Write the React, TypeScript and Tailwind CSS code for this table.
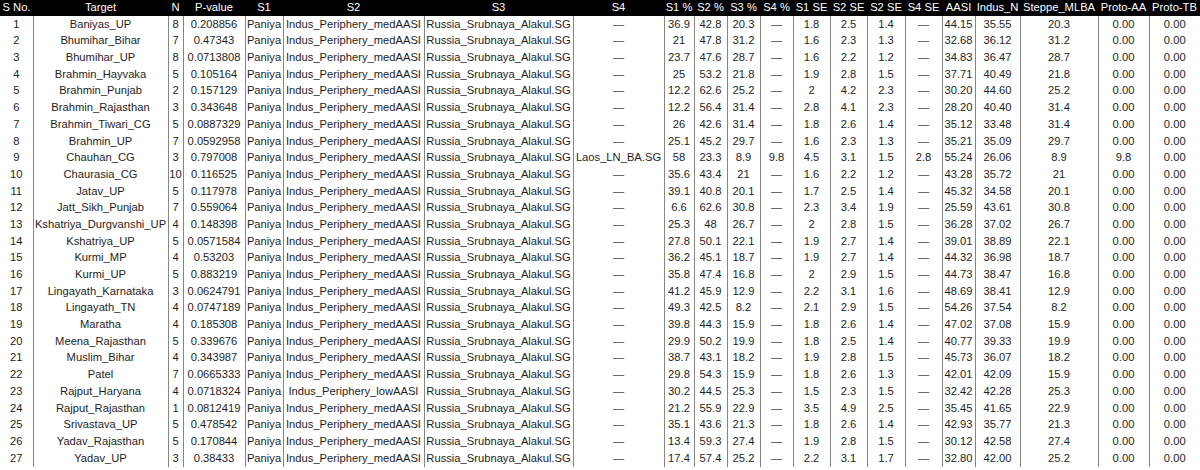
import React from "react";

const D = "—";
const P = "Paniya";
const S2 = "Indus_Periphery_medAASI";
const S3 = "Russia_Srubnaya_Alakul.SG";

type Row = (string | number)[];

const raw: string[] = [
  "Baniyas_UP|8|0.208856|-|36.9|42.8|20.3|-|1.8|2.5|1.4|-|44.15|35.55|20.3|0.00|0.00",
  "Bhumihar_Bihar|7|0.47343|-|21|47.8|31.2|-|1.6|2.3|1.3|-|32.68|36.12|31.2|0.00|0.00",
  "Bhumihar_UP|8|0.0713808|-|23.7|47.6|28.7|-|1.6|2.2|1.2|-|34.83|36.47|28.7|0.00|0.00",
  "Brahmin_Hayvaka|5|0.105164|-|25|53.2|21.8|-|1.9|2.8|1.5|-|37.71|40.49|21.8|0.00|0.00",
  "Brahmin_Punjab|2|0.157129|-|12.2|62.6|25.2|-|2|4.2|2.3|-|30.20|44.60|25.2|0.00|0.00",
  "Brahmin_Rajasthan|3|0.343648|-|12.2|56.4|31.4|-|2.8|4.1|2.3|-|28.20|40.40|31.4|0.00|0.00",
  "Brahmin_Tiwari_CG|5|0.0887329|-|26|42.6|31.4|-|1.8|2.6|1.4|-|35.12|33.48|31.4|0.00|0.00",
  "Brahmin_UP|7|0.0592958|-|25.1|45.2|29.7|-|1.6|2.3|1.3|-|35.21|35.09|29.7|0.00|0.00",
  "Chauhan_CG|3|0.797008|Laos_LN_BA.SG|58|23.3|8.9|9.8|4.5|3.1|1.5|2.8|55.24|26.06|8.9|9.8|0.00",
  "Chaurasia_CG|10|0.116525|-|35.6|43.4|21|-|1.6|2.2|1.2|-|43.28|35.72|21|0.00|0.00",
  "Jatav_UP|5|0.117978|-|39.1|40.8|20.1|-|1.7|2.5|1.4|-|45.32|34.58|20.1|0.00|0.00",
  "Jatt_Sikh_Punjab|7|0.559064|-|6.6|62.6|30.8|-|2.3|3.4|1.9|-|25.59|43.61|30.8|0.00|0.00",
  "Kshatriya_Durgvanshi_UP|4|0.148398|-|25.3|48|26.7|-|2|2.8|1.5|-|36.28|37.02|26.7|0.00|0.00",
  "Kshatriya_UP|5|0.0571584|-|27.8|50.1|22.1|-|1.9|2.7|1.4|-|39.01|38.89|22.1|0.00|0.00",
  "Kurmi_MP|4|0.53203|-|36.2|45.1|18.7|-|1.9|2.7|1.4|-|44.32|36.98|18.7|0.00|0.00",
  "Kurmi_UP|5|0.883219|-|35.8|47.4|16.8|-|2|2.9|1.5|-|44.73|38.47|16.8|0.00|0.00",
  "Lingayath_Karnataka|3|0.0624791|-|41.2|45.9|12.9|-|2.2|3.1|1.6|-|48.69|38.41|12.9|0.00|0.00",
  "Lingayath_TN|4|0.0747189|-|49.3|42.5|8.2|-|2.1|2.9|1.5|-|54.26|37.54|8.2|0.00|0.00",
  "Maratha|4|0.185308|-|39.8|44.3|15.9|-|1.8|2.6|1.4|-|47.02|37.08|15.9|0.00|0.00",
  "Meena_Rajasthan|5|0.339676|-|29.9|50.2|19.9|-|1.8|2.5|1.4|-|40.77|39.33|19.9|0.00|0.00",
  "Muslim_Bihar|4|0.343987|-|38.7|43.1|18.2|-|1.9|2.8|1.5|-|45.73|36.07|18.2|0.00|0.00",
  "Patel|7|0.0665333|-|29.8|54.3|15.9|-|1.8|2.6|1.3|-|42.01|42.09|15.9|0.00|0.00",
  "Rajput_Haryana|4|0.0718324|-|30.2|44.5|25.3|-|1.5|2.3|1.5|-|32.42|42.28|25.3|0.00|0.00",
  "Rajput_Rajasthan|1|0.0812419|-|21.2|55.9|22.9|-|3.5|4.9|2.5|-|35.45|41.65|22.9|0.00|0.00",
  "Srivastava_UP|5|0.478542|-|35.1|43.6|21.3|-|1.8|2.6|1.4|-|42.93|35.77|21.3|0.00|0.00",
  "Yadav_Rajasthan|5|0.170844|-|13.4|59.3|27.4|-|1.9|2.8|1.5|-|30.12|42.58|27.4|0.00|0.00",
  "Yadav_UP|3|0.38433|-|17.4|57.4|25.2|-|2.2|3.1|1.7|-|32.80|42.00|25.2|0.00|0.00",
];

const rows: Row[] = raw.map((line, i) => {
  const f = line.split("|").map((v) => (v === "-" ? D : v));
  const s2 = f[0] === "Rajput_Haryana" ? "Indus_Periphery_lowAASI" : S2;
  return [String(i + 1), f[0], f[1], f[2], P, s2, S3, ...f.slice(3)];
});

const headers = [
  "S No.",
  "Target",
  "N",
  "P-value",
  "S1",
  "S2",
  "S3",
  "S4",
  "S1 %",
  "S2 %",
  "S3 %",
  "S4 %",
  "S1 SE",
  "S2 SE",
  "S2 SE",
  "S4 SE",
  "AASI",
  "Indus_N",
  "Steppe_MLBA",
  "Proto-AA",
  "Proto-TB",
];

const widths = [33, 135, 15, 62, 38, 141, 149, 91, 30, 33, 33, 33, 37, 37, 38, 37, 33, 45, 78, 51, 51];

export default function App() {
  return (
    <div
      className="w-[1200px] h-[470px] overflow-hidden bg-white"
      style={{ fontFamily: '"Liberation Sans", Arial, sans-serif' }}
    >
      <table className="table-fixed border-collapse w-[1200px] text-[11.2px] leading-none">
        <colgroup>
          {widths.map((w, i) => (
            <col key={i} style={{ width: w }} />
          ))}
        </colgroup>
        <thead>
          <tr className="h-[16px] bg-black text-white">
            {headers.map((h, i) => (
              <th key={i} className="p-0 font-normal text-center whitespace-nowrap overflow-visible">
                {h}
              </th>
            ))}
          </tr>
        </thead>
        <tbody className="text-[#1e1e1e]">
          {rows.map((r, ri) => (
            <tr key={ri} className="h-[16.7px]">
              {r.map((c, ci) => (
                <td
                  key={ci}
                  className={
                    "p-0 text-center whitespace-nowrap " +
                    (ci < r.length - 1 ? "border-r border-[#858585]" : "") +
                    (c === D ? " text-[#4a4a4a]" : "")
                  }
                >
                  {c}
                </td>
              ))}
            </tr>
          ))}
        </tbody>
      </table>
    </div>
  );
}
